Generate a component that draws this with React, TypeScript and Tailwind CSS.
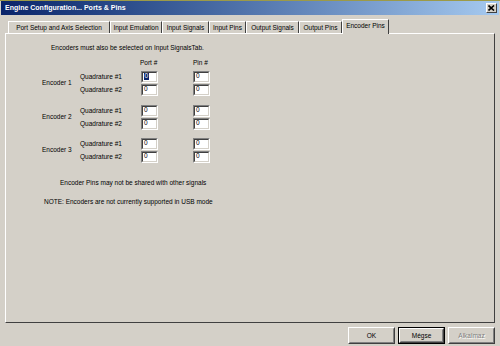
import React from 'react'

const tabs = [
  { label: 'Port Setup and Axis Selection', w: 'w-[102px]' },
  { label: 'Input Emulation', w: 'w-[52px]' },
  { label: 'Input Signals', w: 'w-[47px]' },
  { label: 'Input Pins', w: 'w-[37px]' },
  { label: 'Output Signals', w: 'w-[53px]' },
  { label: 'Output Pins', w: 'w-[43px]' },
]

function Field({ selected }: { selected?: boolean }) {
  return (
    <div className="w-[17px] h-[12px] bg-white border border-t-[#808080] border-l-[#808080] border-r-white border-b-white">
      <div className="h-full border border-t-[#404040] border-l-[#404040] border-r-[#d4d0c8] border-b-[#d4d0c8] flex items-center pl-[1px] leading-none">
        {selected ? (
          <span className="bg-[#0a246a] text-white px-[0.5px]">0</span>
        ) : (
          <span className="text-black">0</span>
        )}
      </div>
    </div>
  )
}

function Row({ label, selected }: { label: string; selected?: boolean }) {
  return (
    <div className="flex items-center h-[12px]">
      <div className="w-[61px]">{label}</div>
      <Field selected={selected} />
      <div className="w-[35px]" />
      <Field />
    </div>
  )
}

function Group({ name, first, className }: { name: string; first?: boolean; className?: string }) {
  return (
    <div className={`flex items-center ${className ?? ''}`}>
      <div className="w-[38px]">{name}</div>
      <div className="flex flex-col gap-[1px]">
        <Row label="Quadrature #1" selected={first} />
        <Row label="Quadrature #2" />
      </div>
    </div>
  )
}

function Button({ label, isDefault, disabled }: { label: string; isDefault?: boolean; disabled?: boolean }) {
  return (
    <div className={`w-[47px] h-[17px] ${isDefault ? 'border border-black' : ''}`}>
      <div className="h-full border border-t-white border-l-white border-r-[#404040] border-b-[#404040]">
        <div className="h-full flex items-center justify-center border border-t-[#d4d0c8] border-l-[#d4d0c8] border-r-[#808080] border-b-[#808080]">
          {disabled ? (
            <span className="text-[#808080] [text-shadow:1px_1px_0_#ffffff]">{label}</span>
          ) : (
            <span>{label}</span>
          )}
        </div>
      </div>
    </div>
  )
}

export default function App() {
  return (
    <div
      className="w-[500px] h-[346px] bg-[#d4d0c8] overflow-hidden text-[6.5px] text-black flex flex-col"
      style={{ fontFamily: '"Liberation Sans", Arial, sans-serif' }}
    >
      {/* Title bar */}
      <div className="h-px bg-[#9c9a48]" />
      <div className="h-[14px] mx-[1px] bg-gradient-to-r from-[#0a246a] to-[#a6caf0] flex items-center justify-between pl-[4px] pr-[2px]">
        <span className="text-white font-bold text-[7px]">Engine Configuration... Ports &amp; Pins</span>
        <div className="w-[11px] h-[10px] bg-[#d4d0c8] border border-t-white border-l-white border-r-[#404040] border-b-[#404040] flex items-center justify-center">
          <svg width="7" height="6" viewBox="0 0 7 6">
            <path d="M0.5 0.5 L6 5.5 M6 0.5 L0.5 5.5" stroke="black" strokeWidth="1.6" />
          </svg>
        </div>
      </div>

      {/* Tabs */}
      <div className="flex items-end pl-[8px] mt-[3px] h-[15px]">
        {tabs.map((t) => (
          <div
            key={t.label}
            className={`${t.w} h-[12px] border-t border-l border-r border-t-white border-l-white border-r-[#404040] flex items-center justify-center`}
          >
            {t.label}
          </div>
        ))}
        <div className="w-[47px] h-[15px] -mb-px bg-[#d4d0c8] relative border-t border-l border-r border-t-white border-l-white border-r-[#404040] flex items-center justify-center pb-[2px]">
          Encoder Pins
        </div>
      </div>

      {/* Panel */}
      <div className="mx-[5px] h-[290px] border border-t-white border-l-white border-r-[#404040] border-b-[#404040] pl-[36px]">
        <div className="pl-[9px] mt-[9px]">Encoders must also be selected on Input SignalsTab.</div>
        <div className="flex mt-[5px] pl-[98px]">
          <span className="w-[53px]">Port #</span>
          <span>Pin #</span>
        </div>
        <div className="mt-[3px]">
          <Group name="Encoder 1" first />
          <Group name="Encoder 2" className="mt-[9px]" />
          <Group name="Encoder 3" className="mt-[8px]" />
        </div>
        <div className="pl-[18px] mt-[15px]">Encoder Pins may not be shared with other signals</div>
        <div className="pl-[2px] mt-[10px]">NOTE: Encoders are not currently supported in USB mode</div>
      </div>

      {/* Buttons */}
      <div className="flex justify-end gap-[3px] pr-[5px] mt-[4px]">
        <Button label="OK" />
        <Button label="Mégse" isDefault />
        <Button label="Alkalmaz" disabled />
      </div>
    </div>
  )
}
